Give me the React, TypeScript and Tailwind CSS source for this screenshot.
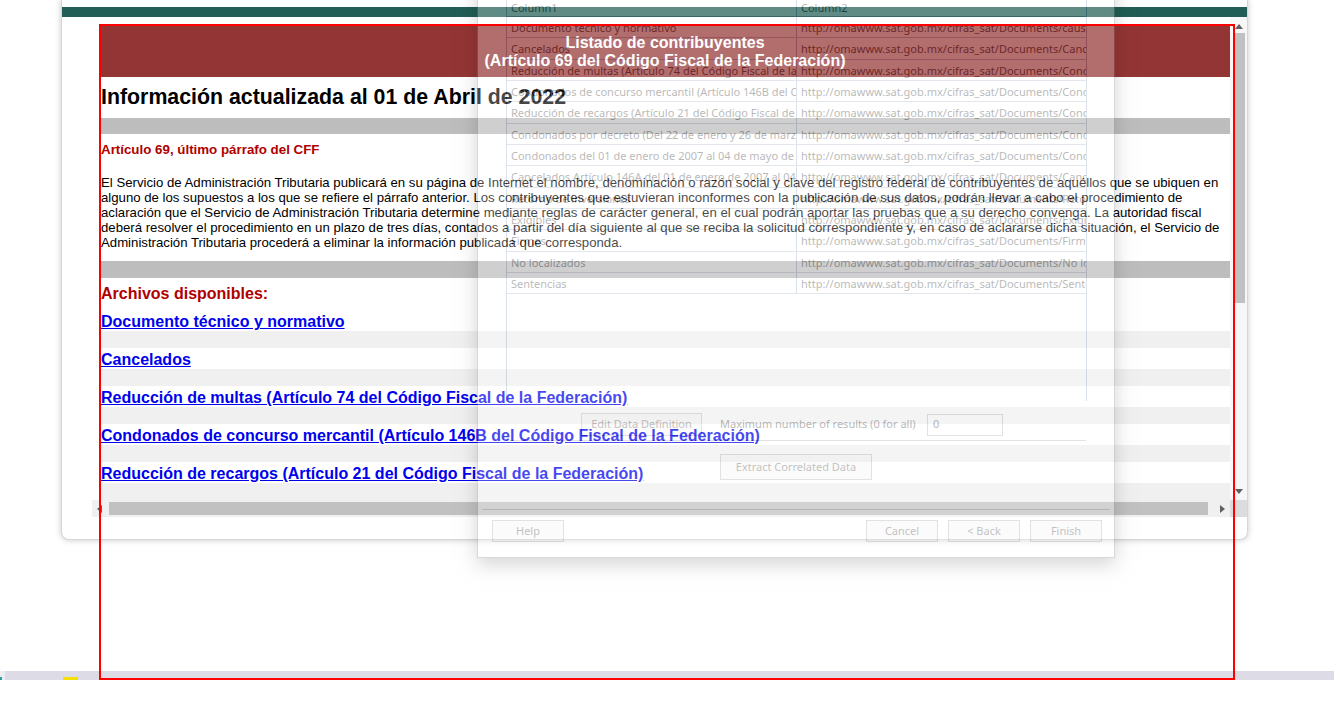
const links = [
  "Documento técnico y normativo",
  "Cancelados",
  "Reducción de multas (Artículo 74 del Código Fiscal de la Federación)",
  "Condonados de concurso mercantil (Artículo 146B del Código Fiscal de la Federación)",
  "Reducción de recargos (Artículo 21 del Código Fiscal de la Federación)",
];

const base = "http://omawww.sat.gob.mx/cifras_sat/Documents/";

const rows: [string, string][] = [
  ["Documento técnico y normativo", base + "causales_de_publicacion.pdf"],
  ["Cancelados", base + "Cancelados.xlsx"],
  ["Reducción de multas (Artículo 74 del Código Fiscal de la Federación)", base + "Condonadosart74.xlsx"],
  ["Condonados de concurso mercantil (Artículo 146B del Código Fiscal de la Federación)", base + "Condonadosart146B.xlsx"],
  ["Reducción de recargos (Artículo 21 del Código Fiscal de la Federación)", base + "Condonadosart21.xlsx"],
  ["Condonados por decreto (Del 22 de enero y 26 de marzo de 2015)", base + "Condonados_xDecreto.xlsx"],
  ["Condonados del 01 de enero de 2007 al 04 de mayo de 2015", base + "Condonados_07_15.xlsx"],
  ["Cancelados Artículo 146A del 01 de enero de 2007 al 04 de mayo de 2015", base + "Cancelados_07_15.xlsx"],
  ["Retorno de inversiones", base + "Retornoinversiones.xlsx"],
  ["Exigibles", base + "Exigibles.xlsx"],
  ["Firmes", base + "Firmes.xlsx"],
  ["No localizados", base + "No localizados.xlsx"],
  ["Sentencias", base + "Sentencias.xlsx"],
];

const paragraph =
  "El Servicio de Administración Tributaria publicará en su página de Internet el nombre, denominación o razón social y clave del registro federal de contribuyentes de aquéllos que se ubiquen en alguno de los supuestos a los que se refiere el párrafo anterior. Los contribuyentes que estuvieran inconformes con la publicación de sus datos, podrán llevar a cabo el procedimiento de aclaración que el Servicio de Administración Tributaria determine mediante reglas de carácter general, en el cual podrán aportar las pruebas que a su derecho convenga. La autoridad fiscal deberá resolver el procedimiento en un plazo de tres días, contados a partir del día siguiente al que se reciba la solicitud correspondiente y, en caso de aclararse dicha situación, el Servicio de Administración Tributaria procederá a eliminar la información publicada que corresponda.";

function Arrow({ dir }: { dir: "up" | "down" | "left" | "right" }) {
  const pts = {
    up: "0,5 4,0 8,5",
    down: "0,0 8,0 4,5",
    left: "5,0 5,8 0,4",
    right: "0,0 0,8 5,4",
  }[dir];
  const vertical = dir === "up" || dir === "down";
  return (
    <svg width={vertical ? 8 : 5} height={vertical ? 5 : 8} viewBox={vertical ? "0 0 8 5" : "0 0 5 8"}>
      <polygon points={pts} fill="#606060" />
    </svg>
  );
}

function PageContent() {
  return (
    <div className="flex w-[1130px] flex-col text-black">
      {/* banner */}
      <div className="flex h-[51px] flex-col items-center justify-center bg-[#943535] text-[16px] font-bold leading-[18px] text-white">
        <span>Listado de contribuyentes</span>
        <span>(Artículo 69 del Código Fiscal de la Federación)</span>
      </div>

      <div className="flex h-[41px] items-center pl-[1px] text-[21.33px] font-bold">
        Información actualizada al 01 de Abril de 2022
      </div>
      <div className="h-[16px] bg-[#bdbdbd]" />

      <p className="pl-[1px] pt-[8px] text-[13.33px] font-bold leading-[15px] text-[#b00000]">
        Artículo 69, último párrafo del CFF
      </p>
      <p className="mt-[18px] pl-[1px] text-[13.2px] leading-[15px]">{paragraph}</p>

      <div className="mt-[11px] h-[17px] bg-[#bdbdbd]" />

      <p className="pl-[1px] pt-[7px] text-[16px] font-bold leading-[18px] text-[#b00000]">
        Archivos disponibles:
      </p>

      <div className="mt-[7px] flex flex-col">
        {links.map((l) => (
          <div key={l} className="flex flex-col">
            <div className="h-[21px] pl-[1px]">
              <a href="#" className="text-[16px] font-bold leading-[21px] text-[#0000ee] underline">
                {l}
              </a>
            </div>
            <div className="h-[17px] bg-[#f0f0f0]" />
          </div>
        ))}
      </div>
    </div>
  );
}

function DlgButton({ label, className }: { label: string; className: string }) {
  return (
    <div
      className={`flex items-center justify-center border border-[#9a9a9a] bg-[#f4f4f4] text-[11px] text-[#222] ${className}`}
    >
      {label}
    </div>
  );
}

function Dialog() {
  return (
    <div className="absolute left-[477px] top-[-20px] flex h-[578px] w-[638px] flex-col border border-[#777] bg-white font-['Noto_Sans','Open_Sans',sans-serif] text-[11px] text-black opacity-[0.28] shadow-[0_6px_18px_rgba(0,0,0,0.6)]">
      {/* correlated data grid */}
      <div className="ml-[28px] mt-[16px] flex h-[404px] w-[581px] flex-col border-x border-[#8598b3]">
        <div className="flex h-[20px] border-b border-[#6f7f96]">
          <div className="w-[290px] border-r border-[#8598b3] pl-[4px] leading-[22px]">Column1</div>
          <div className="flex-1 pl-[4px] leading-[22px]">Column2</div>
        </div>
        {rows.map(([a, b]) => (
          <div key={a} className="flex h-[21.33px] border-b border-[#98a9c2]">
            <div className="w-[290px] overflow-hidden whitespace-nowrap border-r border-[#8598b3] pl-[4px] leading-[22px]">
              {a}
            </div>
            <div className="flex-1 overflow-hidden whitespace-nowrap pl-[4px] leading-[22px]">{b}</div>
          </div>
        ))}
      </div>

      <div className="mt-[12px] flex items-center">
        <DlgButton label="Edit Data Definition" className="ml-[103px] h-[23px] w-[121px]" />
        <span className="ml-[18px] w-[207px] whitespace-nowrap">Maximum number of results (0 for all)</span>
        <div className="flex h-[22px] w-[76px] items-center border border-[#9a9a9a] pl-[5px]">0</div>
      </div>
      <div className="ml-[28px] mt-[4px] h-px w-[580px] bg-[#999]" />

      <DlgButton label="Extract Correlated Data" className="ml-[242px] mt-[13px] h-[26px] w-[152px]" />

      <div className="ml-[4px] mt-[29px] h-px w-[628px] bg-[#999]" />

      <div className="mt-[10px] flex">
        <DlgButton label="Help" className="ml-[14px] h-[22px] w-[72px]" />
        <div className="ml-auto mr-[12px] flex gap-[10px]">
          <DlgButton label="Cancel" className="h-[22px] w-[72px]" />
          <DlgButton label="< Back" className="h-[22px] w-[72px]" />
          <DlgButton label="Finish" className="h-[22px] w-[72px] bg-[#e3e3e3]" />
        </div>
      </div>
    </div>
  );
}

export default function App() {
  return (
    <div className="relative flex h-[704px] w-[1334px] flex-col overflow-hidden bg-white font-['Liberation_Sans',Arial,sans-serif]">
      {/* card with embedded page */}
      <div className="ml-[61px] flex h-[540px] w-[1187px] flex-col overflow-hidden rounded-b-[8px] border border-t-0 border-[#d6d6d6] bg-white shadow-[0_0_6px_rgba(0,0,0,0.22)]">
        <div className="h-[7px]" />
        <div className="h-[10px] bg-[#225e55]" />
        <div className="flex pl-[30px]">
          <div className="flex w-[1155px] flex-col">
            <div className="flex h-[483px]">
              <div className="w-[1138px] overflow-hidden pl-[8px] pt-[9px]">
                <PageContent />
              </div>
              {/* vertical scrollbar */}
              <div className="flex w-[17px] flex-col items-center bg-[#f7f7f7]">
                <div className="mt-[6px] flex h-[6px] items-center">
                  <Arrow dir="up" />
                </div>
                <div className="ml-[2px] mt-[4px] h-[270px] w-[10px] bg-[#c1c1c1]" />
                <div className="mt-auto mb-[6px]">
                  <Arrow dir="down" />
                </div>
              </div>
            </div>
            {/* horizontal scrollbar */}
            <div className="flex h-[17px]">
              <div className="flex w-[1138px] items-center bg-[#f0f0f0]">
                <div className="ml-[5px]">
                  <Arrow dir="left" />
                </div>
                <div className="ml-[7px] h-[13px] w-[1099px] bg-[#c1c1c1]" />
                <div className="ml-[12px]">
                  <Arrow dir="right" />
                </div>
              </div>
              <div className="w-[17px] bg-[#dcdcdc]" />
            </div>
          </div>
        </div>
      </div>

      <div className="h-[131px]" />
      {/* taskbar strip */}
      <div className="flex h-[9px] bg-[#dcdbe6]">
        <div className="w-[5px] bg-[#eceef2]">
          <div className="mt-[6px] h-[3px] w-[2px] bg-[#2aa198]" />
        </div>
        <div className="ml-[58px] mt-[6px] h-[3px] w-[15px] bg-[#f4e000]" />
      </div>

      <Dialog />

      {/* highlight frame */}
      <div className="pointer-events-none absolute left-[99px] top-[24px] h-[656px] w-[1136px] border-2 border-[#ff0000]" />
    </div>
  );
}
